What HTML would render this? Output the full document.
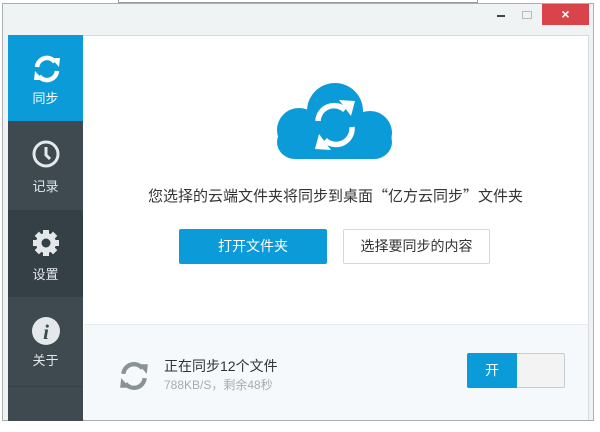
<!DOCTYPE html>
<html><head><meta charset="utf-8"><style>
*{margin:0;padding:0;box-sizing:border-box}
body{width:600px;height:432px;background:#fff;position:relative;overflow:hidden;font-family:"Liberation Sans","Noto Sans CJK SC",sans-serif}
.abs{position:absolute}
.q{font-family:"Noto Sans CJK SC",sans-serif}
</style></head><body>
<div class="abs" style="left:118px;top:0;width:360px;height:3px;border:1px solid #999;border-top:none;background:#fff"></div>
<div class="abs" style="left:2px;top:3px;width:592px;height:418px;border:1px solid #a9b0b3;background:#f0f3f4"></div>
<div class="abs" style="left:497px;top:15px;width:8px;height:2px;background:#444"></div>
<div class="abs" style="left:522px;top:11px;width:10px;height:8px;border:1px solid #bbb"></div>
<div class="abs" style="left:542px;top:4px;width:47px;height:21px;background:#d9434a;color:#fff;font-size:14px;font-weight:bold;text-align:center;line-height:21px">×</div>
<div class="abs" style="left:8px;top:35px;width:581px;height:385px;border:1px solid #d5dbde;background:#fff"></div>
<div class="abs" style="left:8px;top:35px;width:75px;height:386px;background:#3e4a50"></div>
<div class="abs" style="left:8px;top:35px;width:75px;height:86px;background:#0b9bd9"></div>
<div class="abs" style="left:8px;top:210px;width:75px;height:87px;background:#343f46"></div>
<div class="abs" style="left:8px;top:386px;width:75px;height:1px;background:#36434a"></div>
<svg class="abs" style="left:32px;top:54px" width="30" height="30" viewBox="0 0 30 30"><g fill="none" stroke="#fff" stroke-width="4.5"><path d="M5 13A10 10 0 0 1 23 8"/><path d="M25 17A10 10 0 0 1 7 22"/></g><path d="M19 4L28 4L27 13Z" fill="#fff"/><path d="M11 26L2 26L3 17Z" fill="#fff"/></svg>
<div class="abs" style="left:8px;width:75px;top:88px;text-align:center;color:#fff;font-size:13px">同步</div>
<svg class="abs" style="left:31px;top:139px" width="30" height="30"><circle cx="15" cy="15" r="12" fill="none" stroke="#e4e8ea" stroke-width="3"/><path d="M15 8V16L19 20" fill="none" stroke="#e4e8ea" stroke-width="3"/></svg>
<div class="abs" style="left:8px;width:75px;top:176px;text-align:center;color:#e4e8ea;font-size:13px">记录</div>
<svg class="abs" style="left:31px;top:228px" width="30" height="30" viewBox="0 0 30 30"><g fill="#e4e8ea"><circle cx="15" cy="15" r="10"/><rect x="12" y="2" width="6" height="26"/><rect x="2" y="12" width="26" height="6"/><rect x="12" y="2" width="6" height="26" transform="rotate(45 15 15)"/><rect x="12" y="2" width="6" height="26" transform="rotate(-45 15 15)"/></g><circle cx="15" cy="15" r="4.5" fill="#343f46"/></svg>
<div class="abs" style="left:8px;width:75px;top:264px;text-align:center;color:#e4e8ea;font-size:13px">设置</div>
<svg class="abs" style="left:31px;top:316px" width="30" height="30"><circle cx="15" cy="15" r="14" fill="#e4e8ea"/><text x="15" y="23" text-anchor="middle" font-family="Liberation Serif" font-style="italic" font-weight="bold" font-size="21" fill="#3e4a50">i</text></svg>
<div class="abs" style="left:8px;width:75px;top:350px;text-align:center;color:#e4e8ea;font-size:13px">关于</div>
<svg class="abs" style="left:275px;top:80px" width="120" height="82" viewBox="0 0 120 82"><g fill="#0b9bd9"><circle cx="60" cy="31" r="28"/><circle cx="24" cy="50" r="22"/><circle cx="95" cy="53" r="22"/><rect x="2" y="45" width="115" height="34" rx="18"/></g><g fill="none" stroke="#fff" stroke-width="5.5"><path d="M43 41A16 16 0 0 1 70 30"/><path d="M77 47A16 16 0 0 1 50 60"/></g><path d="M64 20L80 21L76 36Z" fill="#fff"/><path d="M56 70L40 69L44 54Z" fill="#fff"/></svg>
<div class="abs" style="left:83px;width:505px;top:185px;text-align:center;color:#333;font-size:15px">您选择的云端文件夹将同步到桌面<span class="q">“</span>亿方云同步<span class="q">”</span>文件夹</div>
<div class="abs" style="left:179px;top:229px;width:148px;height:35px;background:#0b9bd9;border-radius:2px;color:#fff;font-size:14px;text-align:center;line-height:35px">打开文件夹</div>
<div class="abs" style="left:343px;top:229px;width:147px;height:35px;border:1px solid #d3d8db;border-radius:2px;color:#333;font-size:14px;text-align:center;line-height:33px;background:#fff">选择要同步的内容</div>
<div class="abs" style="left:84px;top:324px;width:504px;height:96px;background:#f6f9fb;border-top:1px solid #e8edf0"></div>
<svg class="abs" style="left:117px;top:360px" width="34" height="32" viewBox="0 0 30 30"><g fill="none" stroke="#8a9296" stroke-width="4"><path d="M5 13A10 10 0 0 1 23 8"/><path d="M25 17A10 10 0 0 1 7 22"/></g><path d="M19 4L28 4L27 13Z" fill="#8a9296"/><path d="M11 26L2 26L3 17Z" fill="#8a9296"/></svg>
<div class="abs" style="left:164px;top:356px;color:#333;font-size:14px">正在同步12个文件</div>
<div class="abs" style="left:164px;top:376px;color:#a5acb0;font-size:12px">788KB/S，剩余48秒</div>
<div class="abs" style="left:467px;top:353px;width:98px;height:35px;border:1px solid #c8cdd0;border-radius:2px;background:#f3f3f3"></div>
<div class="abs" style="left:467px;top:353px;width:50px;height:35px;background:#0b9bd9;border-radius:2px 0 0 2px;color:#fff;font-size:14px;text-align:center;line-height:35px">开</div>
</body></html>
